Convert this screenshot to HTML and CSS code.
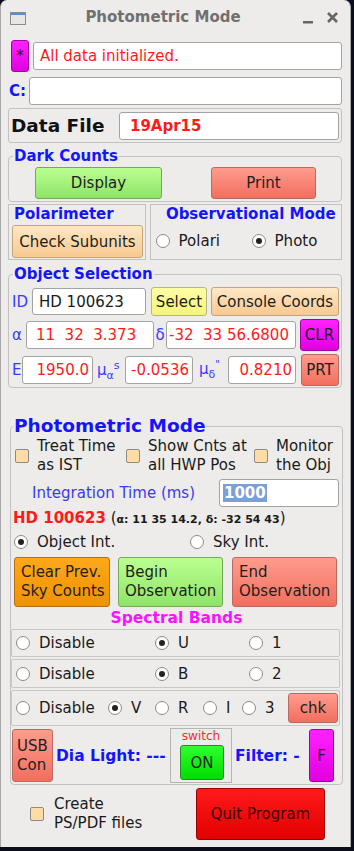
FILE: index.html
```html
<!DOCTYPE html>
<html>
<head>
    <link rel="stylesheet" href="styles.css">
</head>
<body>
<div class="window">
    <div class="titlebar">
        <svg class="win-icon" width="16" height="13" viewBox="0 0 16 13">
            <rect x="0.5" y="0.5" width="15" height="12" fill="#e6e6e6" stroke="#8c8c8c"/>
            <rect x="1" y="1" width="14" height="2" fill="#5a8fd8"/>
        </svg>
        <div class="title">Photometric Mode</div>
        <svg class="win-ctrl" width="40" height="14" viewBox="0 0 40 14">
            <rect x="3" y="10" width="10" height="2.5" fill="#666"/>
            <path d="M28 2 L37 11 M37 2 L28 11" stroke="#666" stroke-width="2.6"/>
        </svg>
    </div>

    <div class="content">
        <div class="status-row">
            <div class="btn magenta star">*</div>
            <div class="entry status">All data initialized.</div>
        </div>
        <div class="cmd-row">
            <span class="c-label">C:</span>
            <div class="entry cmd"></div>
        </div>
        <div class="file-box">
            <span class="file-label">Data File</span>
            <div class="entry file">19Apr15</div>
        </div>

        <fieldset class="group dark">
            <legend>Dark Counts</legend>
            <div class="dark-row">
                <div class="btn green display">Display</div>
                <div class="btn red print">Print</div>
            </div>
        </fieldset>

        <div class="mode-row">
            <div class="frame polar">
                <div class="frame-label">Polarimeter</div>
                <div class="btn peach subunits">Check Subunits</div>
            </div>
            <div class="frame obs">
                <div class="frame-label center">Observational Mode</div>
                <div class="obs-radios">
                    <label class="radio polari"><span class="dot"></span>Polari</label>
                    <label class="radio"><span class="dot on"></span>Photo</label>
                </div>
            </div>
        </div>

        <fieldset class="group objsel">
            <legend>Object Selection</legend>
            <div class="obj-row id-row">
                <span class="lbl id-lbl">ID</span>
                <div class="entry id-entry">HD 100623</div>
                <div class="btn yellow select">Select</div>
                <div class="btn peach console">Console Coords</div>
            </div>
            <div class="obj-row coord-row">
                <span class="lbl alpha-lbl">α</span>
                <div class="entry coord alpha">11  32  3.373</div>
                <span class="lbl delta-lbl">δ</span>
                <div class="entry coord delta">-32  33 56.6800</div>
                <div class="btn magenta clr">CLR</div>
            </div>
            <div class="obj-row coord-row">
                <span class="lbl e-lbl">E</span>
                <div class="entry coord num epoch">1950.0</div>
                <span class="lbl mu-a">μ<sub>α</sub><sup>s</sup></span>
                <div class="entry coord num pm">-0.0536</div>
                <span class="lbl mu-d">μ<sub>δ</sub><sup class="arcsec">''</sup></span>
                <div class="entry coord num pm">0.8210</div>
                <div class="btn red prt">PRT</div>
            </div>
        </fieldset>

        <fieldset class="group photo">
            <legend>Photometric Mode</legend>
            <div class="check-row">
                <div class="check-item first"><span class="box"></span><span class="check-text">Treat Time<br>as IST</span></div>
                <div class="check-item second"><span class="box"></span><span class="check-text">Show Cnts at<br>all HWP Pos</span></div>
                <div class="check-item"><span class="box"></span><span class="check-text">Monitor<br>the Obj</span></div>
            </div>
            <div class="int-row">
                <span class="int-label">Integration Time (ms)</span>
                <div class="entry int-entry"><span class="sel">1000</span></div>
            </div>
            <div class="target-line">
                <span class="target-name">HD 100623</span> (<span class="target-pos">α: 11 35 14.2, δ: -32 54 43</span>)
            </div>
            <div class="int-radios">
                <label class="radio objint"><span class="dot on"></span>Object Int.</label>
                <label class="radio"><span class="dot"></span>Sky Int.</label>
            </div>
            <div class="obs-buttons">
                <div class="btn orange big clear">Clear Prev.<br>Sky Counts</div>
                <div class="btn green big begin">Begin<br>Observation</div>
                <div class="btn red big end">End<br>Observation</div>
            </div>
            <div class="bands-title">Spectral Bands</div>
            <div class="band-row">
                <label class="radio b-dis"><span class="dot"></span>Disable</label>
                <label class="radio b-mid"><span class="dot on"></span>U</label>
                <label class="radio"><span class="dot"></span>1</label>
            </div>
            <div class="band-row second">
                <label class="radio b-dis"><span class="dot"></span>Disable</label>
                <label class="radio b-mid"><span class="dot on"></span>B</label>
                <label class="radio"><span class="dot"></span>2</label>
            </div>
            <div class="band-row third">
                <label class="radio b-dis3"><span class="dot"></span>Disable</label>
                <label class="radio b-v"><span class="dot on"></span>V</label>
                <label class="radio b-r"><span class="dot"></span>R</label>
                <label class="radio b-i"><span class="dot"></span>I</label>
                <label class="radio"><span class="dot"></span>3</label>
                <div class="btn red chk">chk</div>
            </div>
            <div class="usb-row">
                <div class="btn red usb">USB<br>Con</div>
                <span class="bold-blue dia">Dia Light: ---</span>
                <div class="switch-box">
                    <div class="switch-label">switch</div>
                    <div class="btn lime on-btn">ON</div>
                </div>
                <span class="bold-blue filter">Filter: -</span>
                <div class="btn magenta f-btn">F</div>
            </div>
        </fieldset>

        <div class="bottom-row">
            <div class="check-item pdf"><span class="box"></span><span class="check-text">Create<br>PS/PDF files</span></div>
            <div class="btn quit">Quit Program</div>
        </div>
    </div>
</div>
</body>
</html>
```

FILE: styles.css
```css
body {
    margin: 0;
    background: #0b0e1a;
    font-family: "DejaVu Sans", sans-serif;
    font-size: 15px;
    color: #1a1a1a;
}

.window {
    width: 351px;
    height: 847px;
    background: #edeceb;
    border-radius: 7px 7px 0 0;
    box-sizing: border-box;
    border-left: 1px solid #a9a9a9;
    border-right: 1px solid #a9a9a9;
    overflow: hidden;
}

.titlebar {
    height: 34px;
    display: flex;
    align-items: center;
}

.win-icon {
    margin-left: 9px;
    margin-top: 2px;
}

.title {
    flex: 1;
    text-align: center;
    font-weight: bold;
    font-size: 15px;
    color: #707070;
}

.win-ctrl {
    margin-right: 10px;
    margin-top: 2px;
}

.content {
    padding-left: 7px;
    width: 334px;
}

/* common widgets */

.entry {
    background: #fff;
    border: 1px solid #a3a3a3;
    border-radius: 3px;
    box-sizing: border-box;
    height: 28px;
    display: flex;
    align-items: center;
    padding: 0 6px;
    white-space: pre;
    overflow: hidden;
}

.btn {
    box-sizing: border-box;
    border: 1px solid #8d8d8d;
    border-radius: 3px;
    display: flex;
    align-items: center;
    justify-content: center;
    color: #1e1e1e;
    white-space: nowrap;
}

.green {
    background: linear-gradient(#baff90, #8fe468);
    border-color: #74a85a;
}

.red {
    background: linear-gradient(#ff9c8d, #f26e5f);
    border-color: #b86b60;
}

.peach {
    background: linear-gradient(#ffe8c6, #f7c991);
    border-color: #c4a578;
}

.yellow {
    background: linear-gradient(#ffffa6, #f4f47a);
    border-color: #b8b87a;
}

.magenta {
    background: linear-gradient(#ff22ff, #e000e0);
    border-color: #a000a0;
}

.orange {
    background: linear-gradient(#ffa81a, #f09200);
    border-color: #b07020;
}

.lime {
    background: linear-gradient(#30ff30, #00dc00);
    border-color: #2a8a2a;
}

.radio {
    display: flex;
    align-items: center;
    white-space: nowrap;
}

.dot {
    width: 12px;
    height: 12px;
    border: 1px solid #8a8a8a;
    border-radius: 50%;
    background: #fff;
    margin-right: 9px;
    display: flex;
    align-items: center;
    justify-content: center;
    flex-shrink: 0;
}

.dot.on::after {
    content: "";
    width: 6px;
    height: 6px;
    border-radius: 50%;
    background: #222;
}

.box {
    width: 12px;
    height: 12px;
    border: 1px solid #8a8a8a;
    border-radius: 2px;
    background: #ffdba6;
    flex-shrink: 0;
}

.group {
    margin: 0;
    padding: 0;
    border: 1px solid #c2c2c2;
    border-radius: 4px;
    min-width: 0;
}

.group legend {
    padding: 0 1px;
    margin-left: 4px;
    font-weight: bold;
    color: #1414ff;
    line-height: 18px;
}

/* top rows */

.status-row {
    display: flex;
    align-items: center;
    height: 32px;
    margin-top: 6px;
}

.star {
    width: 18px;
    height: 32px;
    margin-left: 3px;
    font-size: 15px;
}

.status {
    margin-left: 4px;
    width: 310px;
    color: #ff1a1a;
}

.cmd-row {
    display: flex;
    align-items: center;
    height: 28px;
    margin-top: 5px;
}

.c-label {
    width: 20px;
    font-weight: bold;
    color: #1414ff;
    padding-left: 1px;
}

.cmd {
    width: 315px;
}

.file-box {
    margin-top: 3px;
    height: 35px;
    box-sizing: border-box;
    border: 1px solid #c2c2c2;
    border-radius: 3px;
    display: flex;
    align-items: center;
    padding: 0 2px 0 2px;
}

.file-label {
    font-weight: bold;
    font-size: 18.5px;
    color: #111;
}

.file {
    margin-left: auto;
    width: 220px;
    color: #ff1a1a;
    font-weight: bold;
    padding-left: 10px;
}

/* dark counts */

.dark {
    margin-top: 4px;
    padding-bottom: 2px;
}

.dark-row {
    display: flex;
    padding-top: 2px;
}

.display {
    margin-left: 26px;
    width: 127px;
    height: 32px;
}

.print {
    margin-left: 49px;
    width: 105px;
    height: 32px;
}

/* polarimeter / observational mode */

.mode-row {
    display: flex;
    margin-top: 2px;
}

.frame {
    box-sizing: border-box;
    height: 56px;
    border: 1px solid #c2c2c2;
}

.polar {
    width: 138px;
}

.obs {
    width: 193px;
    margin-left: 4px;
}

.frame-label {
    font-weight: bold;
    color: #1414ff;
    line-height: 18px;
    padding-left: 5px;
}

.frame-label.center {
    text-align: center;
    padding-left: 10px;
}

.subunits {
    margin: 2px 0 0 3px;
    width: 131px;
    height: 33px;
}

.obs-radios {
    display: flex;
    margin-top: 8px;
    padding-left: 5px;
    line-height: 20px;
}

.polari {
    width: 96px;
}

/* object selection */

.objsel {
    margin-top: 5px;
    padding: 4px 0 1px 0;
}

.obj-row {
    display: flex;
    align-items: center;
}

.id-row {
    height: 29px;
}

.coord-row {
    height: 32px;
    margin-top: 3px;
}

.lbl {
    color: #3a3aff;
    white-space: nowrap;
}

.id-lbl {
    width: 20px;
    margin-left: 3px;
}

.id-entry {
    width: 114px;
    height: 27px;
    color: #1a1a1a;
}

.select {
    margin-left: 5px;
    width: 56px;
    height: 29px;
}

.console {
    margin-left: 4px;
    width: 128px;
    height: 29px;
}

.coord {
    color: #ff1a1a;
}

.alpha-lbl {
    width: 14px;
    margin-left: 3px;
}

.alpha {
    width: 128px;
    padding-left: 9px;
}

.delta-lbl {
    width: 12px;
    text-align: center;
}

.delta {
    width: 130px;
    padding-left: 2px;
}

.clr {
    margin-left: 4px;
    width: 39px;
    height: 32px;
}

.e-lbl {
    width: 10px;
    margin-left: 3px;
}

.num {
    justify-content: flex-end;
    padding: 0 3px;
}

.epoch {
    width: 71px;
}

.pm {
    width: 68px;
}

.mu-a {
    width: 32px;
    padding-left: 4px;
    box-sizing: border-box;
}

.mu-d {
    width: 35px;
    padding-left: 6px;
    box-sizing: border-box;
}

.lbl sub {
    font-size: 11px;
    vertical-align: -4px;
}

.lbl sup {
    font-size: 11px;
    vertical-align: 6px;
}

.lbl sup.arcsec {
    font-size: 10px;
    font-style: italic;
    letter-spacing: -1px;
}

.prt {
    margin-left: 5px;
    width: 38px;
    height: 32px;
}

/* photometric mode */

.photo {
    margin-top: 27px;
    margin-left: 2px;
    width: 333px;
    box-sizing: border-box;
    padding: 0 0 1px 0;
}

.photo legend {
    font-size: 18.5px;
    line-height: 22px;
    margin-left: 2px;
}

.check-row {
    display: flex;
    line-height: 19px;
}

.check-item {
    display: flex;
    align-items: center;
}

.check-text {
    margin-left: 8px;
}

.check-item.first {
    margin-left: 4px;
    width: 111px;
}

.check-item.second {
    width: 128px;
}

.int-row {
    display: flex;
    align-items: center;
    margin-top: 4px;
    height: 27px;
}

.int-label {
    margin-left: 21px;
    color: #3a3aee;
}

.int-entry {
    margin-left: auto;
    margin-right: 3px;
    width: 120px;
    height: 28px;
    padding-left: 3px;
}

.sel {
    background: #7b9fd6;
    color: #fff;
    font-weight: bold;
    padding: 0 1px;
}

.target-line {
    margin-top: 3px;
    margin-left: 2px;
    line-height: 18px;
    white-space: nowrap;
}

.target-name {
    color: #ff1a1a;
    font-weight: bold;
}

.target-pos {
    font-weight: bold;
    font-size: 11px;
}

.int-radios {
    display: flex;
    margin-top: 3px;
    line-height: 20px;
}

.objint {
    margin-left: 3px;
    width: 176px;
}

.obs-buttons {
    display: flex;
    margin-top: 5px;
}

.big {
    height: 50px;
    justify-content: flex-start;
    padding-left: 6px;
    line-height: 19px;
}

.clear {
    margin-left: 3px;
    width: 96px;
}

.begin {
    margin-left: 8px;
    width: 105px;
}

.end {
    margin-left: 9px;
    width: 105px;
}

.bands-title {
    margin-top: 3px;
    line-height: 16px;
    text-align: center;
    font-weight: bold;
    font-size: 15.5px;
    color: #ff10ff;
}

.band-row {
    margin-top: 3px;
    width: 329px;
    height: 28px;
    box-sizing: border-box;
    border: 1px solid #c8c8c8;
    border-radius: 2px;
    display: flex;
    align-items: center;
    padding-left: 4px;
}

.band-row.second {
    margin-top: 2px;
    height: 29px;
}

.band-row.third {
    margin-top: 2px;
    height: 36px;
}

.b-dis {
    width: 139px;
}

.b-mid {
    width: 94px;
}

.b-dis3 {
    width: 92px;
}

.b-v {
    width: 47px;
}

.b-r {
    width: 48px;
}

.b-i {
    width: 39px;
}

.chk {
    margin-left: auto;
    margin-right: 1px;
    width: 50px;
    height: 30px;
}

.usb-row {
    display: flex;
    align-items: center;
    margin-top: 2px;
    height: 55px;
}

.usb {
    margin-left: 1px;
    width: 41px;
    height: 53px;
    flex-direction: column;
    line-height: 19px;
}

.bold-blue {
    font-weight: bold;
    font-size: 15.5px;
    color: #1414ff;
    white-space: nowrap;
}

.dia {
    margin-left: 3px;
    width: 114px;
}

.switch-box {
    width: 62px;
    height: 55px;
    box-sizing: border-box;
    border: 1px solid #b5b5b5;
    display: flex;
    flex-direction: column;
    align-items: center;
}

.switch-label {
    font-size: 12px;
    color: #ff2a2a;
    line-height: 15px;
}

.on-btn {
    margin-top: 1px;
    margin-left: 2px;
    width: 44px;
    height: 35px;
}

.filter {
    margin-left: 3px;
    width: 74px;
}

.f-btn {
    width: 25px;
    height: 53px;
}

.bottom-row {
    display: flex;
    align-items: center;
    margin-top: 3px;
    height: 52px;
}

.pdf {
    margin-left: 22px;
    width: 166px;
    line-height: 19px;
}

.pdf .check-text {
    margin-left: 10px;
}

.quit {
    width: 129px;
    height: 52px;
    background: linear-gradient(#ff1a1a, #e20000);
    border-color: #9a0000;
    color: #3a0000;
}
```
